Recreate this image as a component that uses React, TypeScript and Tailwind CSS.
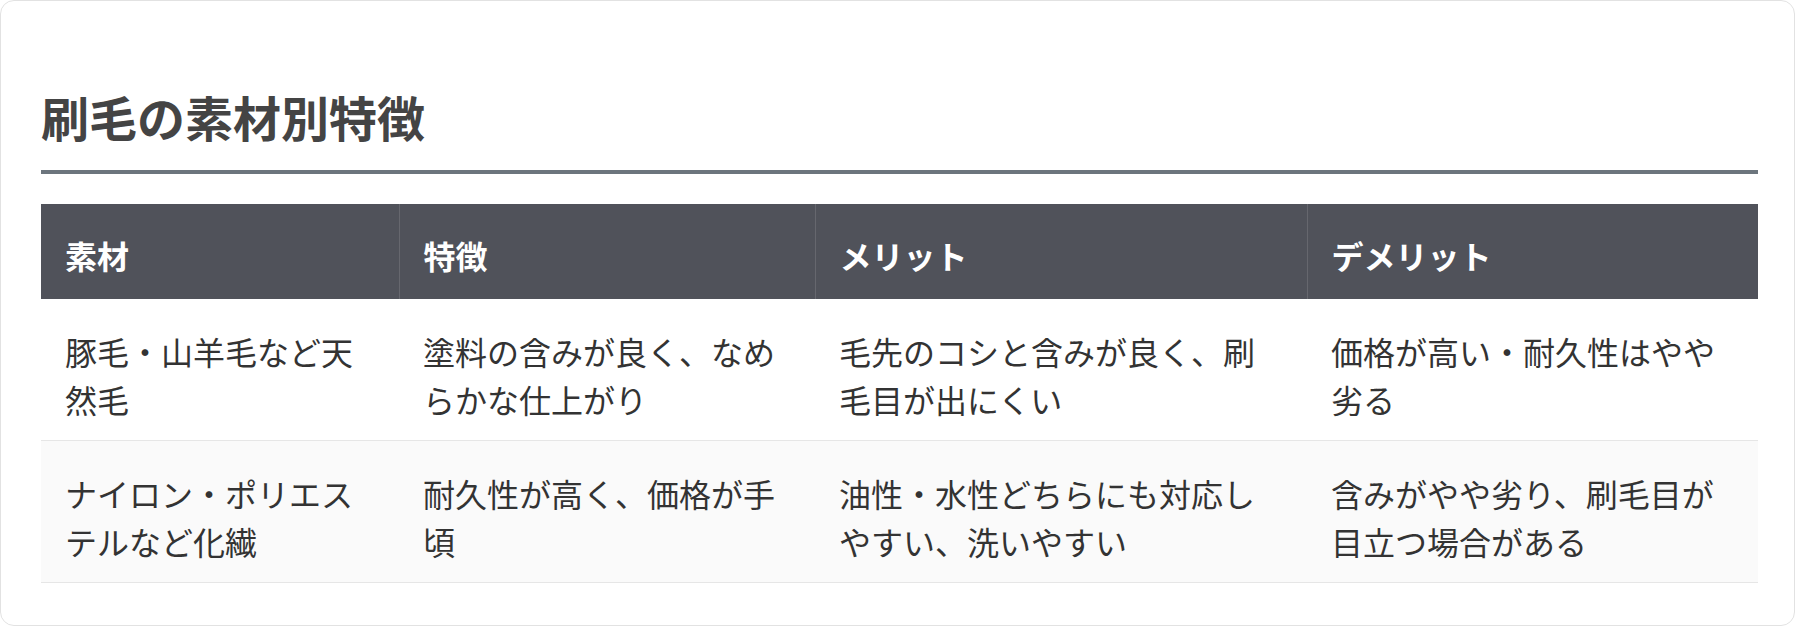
import React from "react";

const font = { fontFamily: '"Noto Sans CJK JP", "Noto Sans", sans-serif' };

const headers = ["素材", "特徴", "メリット", "デメリット"];
const widths = ["w-[358px]", "w-[416px]", "w-[492px]", "w-[451px]"];
const rows = [
  [
    "豚毛・山羊毛など天然毛",
    "塗料の含みが良く、なめらかな仕上がり",
    "毛先のコシと含みが良く、刷毛目が出にくい",
    "価格が高い・耐久性はやや劣る",
  ],
  [
    "ナイロン・ポリエステルなど化繊",
    "耐久性が高く、価格が手頃",
    "油性・水性どちらにも対応しやすい、洗いやすい",
    "含みがやや劣り、刷毛目が目立つ場合がある",
  ],
];

export default function App() {
  return (
    <div className="w-[1800px] h-[626px] bg-white" style={font}>
      <div className="w-[1795px] h-[626px] border border-[#e2e2e2] rounded-[14px] bg-white pt-[87px] pl-[40px] pr-[36px]">
        <h2 className="text-[48px] font-bold leading-[1.2] text-[#444444] pb-[24px] border-b-4 border-[#6c757d]">
          刷毛の素材別特徴
        </h2>
        <table className="mt-[30px] w-[1717px] table-fixed border-collapse">
          <thead>
            <tr className="bg-[#50525a]">
              {headers.map((h, i) => (
                <th
                  key={h}
                  className={`${widths[i]} text-left text-white font-bold text-[32px] leading-[1.6] pl-[24px] pr-[24px] pt-[26px] pb-[18px] ${
                    i > 0 ? "border-l border-[#66676e]" : ""
                  }`}
                >
                  {h}
                </th>
              ))}
            </tr>
          </thead>
          <tbody>
            {rows.map((r, ri) => (
              <tr
                key={ri}
                className={`border-b border-[#e6e6e6] ${ri === 1 ? "bg-[#fafafa]" : "bg-white"}`}
              >
                {r.map((c, ci) => (
                  <td
                    key={ci}
                    className="align-top text-[32px] leading-[1.5] text-[#333333] pl-[24px] pr-[24px] pt-[28px] pb-[17px]"
                  >
                    {c}
                  </td>
                ))}
              </tr>
            ))}
          </tbody>
        </table>
      </div>
    </div>
  );
}
